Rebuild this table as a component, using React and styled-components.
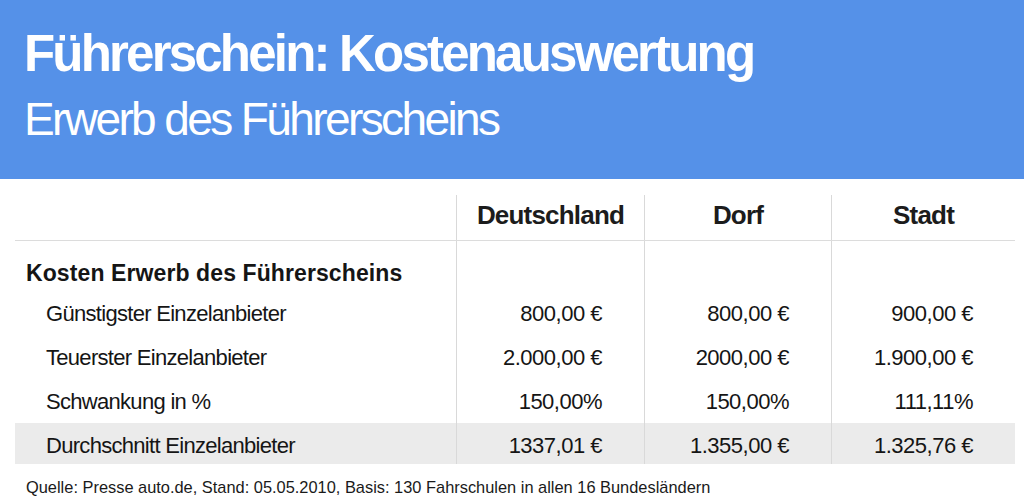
import React from "react";
import styled, { createGlobalStyle } from "styled-components";

const GlobalStyle = createGlobalStyle`
  body {
    margin: 0;
    background: #ffffff;
    font-family: "Liberation Sans", Arial, sans-serif;
    color: #151515;
  }
`;

const Page = styled.div`
  width: 1024px;
  height: 500px;
  overflow: hidden;
`;

const Banner = styled.header`
  height: 179px;
  box-sizing: border-box;
  padding: 26px 0 0 24px;
  background: #5591e8;
  color: #ffffff;
`;

const Title = styled.h1`
  margin: 0;
  font-size: 51px;
  line-height: 56px;
  font-weight: 700;
  letter-spacing: -2.8px;
`;

const Subtitle = styled.h2`
  margin: 11px 0 0;
  font-size: 46px;
  line-height: 52px;
  font-weight: 400;
  letter-spacing: -2.6px;
`;

const Table = styled.div`
  width: 1000px;
  margin: 16px 0 0 15px;
`;

const Row = styled.div`
  display: grid;
  grid-template-columns: 441px 188px 187px 1fr;
  height: ${(props) => props.height || 44}px;
  background: ${(props) => (props.shaded ? "#ebebeb" : "transparent")};
  border-bottom: ${(props) => (props.ruled ? "1px solid #dcdcdc" : "none")};
`;

const HeadCell = styled.div`
  border-left: ${(props) => (props.first ? "none" : "1px solid #d9d9d9")};
  padding-top: 5px;
  text-align: center;
  font-size: 26px;
  line-height: 30px;
  font-weight: 700;
  letter-spacing: -0.8px;
  color: #1c1c1c;
`;

const Label = styled.div`
  padding: ${(props) => (props.group ? "20px 0 0 11px" : "11px 0 0 31px")};
  font-size: ${(props) => (props.group ? "23px" : "22px")};
  font-weight: ${(props) => (props.group ? 700 : 400)};
  letter-spacing: ${(props) => (props.group ? "0.1px" : "-0.7px")};
  line-height: 24px;
  white-space: nowrap;
`;

const Value = styled.div`
  border-left: 1px solid #d9d9d9;
  padding: 11px 42px 0 0;
  text-align: right;
  font-size: 22px;
  line-height: 24px;
  letter-spacing: -0.5px;
  white-space: nowrap;
`;

const Source = styled.p`
  margin: 13px 0 0 26px;
  font-size: 16.4px;
  line-height: 20px;
  color: #1a1a1a;
`;

const rows = [
  { label: "Günstigster Einzelanbieter", values: ["800,00 €", "800,00 €", "900,00 €"] },
  { label: "Teuerster Einzelanbieter", values: ["2.000,00 €", "2000,00 €", "1.900,00 €"] },
  { label: "Schwankung in %", values: ["150,00%", "150,00%", "111,11%"] },
  {
    label: "Durchschnitt Einzelanbieter",
    values: ["1337,01 €", "1.355,00 €", "1.325,76 €"],
    shaded: true,
  },
];

const App = () => {
  return (
    <Page>
      <GlobalStyle />
      <Banner>
        <Title>Führerschein: Kostenauswertung</Title>
        <Subtitle>Erwerb des Führerscheins</Subtitle>
      </Banner>
      <Table>
        <Row height={45} ruled>
          <HeadCell first />
          <HeadCell>Deutschland</HeadCell>
          <HeadCell>Dorf</HeadCell>
          <HeadCell>Stadt</HeadCell>
        </Row>
        <Row height={50}>
          <Label group>Kosten Erwerb des Führerscheins</Label>
          <Value />
          <Value />
          <Value />
        </Row>
        {rows.map((row) => (
          <Row key={row.label} shaded={row.shaded} height={row.shaded ? 41 : 44}>
            <Label>{row.label}</Label>
            {row.values.map((v, i) => (
              <Value key={i}>{v}</Value>
            ))}
          </Row>
        ))}
      </Table>
      <Source>
        Quelle: Presse auto.de, Stand: 05.05.2010, Basis: 130 Fahrschulen in allen 16 Bundesländern
      </Source>
    </Page>
  );
};

export default App;
